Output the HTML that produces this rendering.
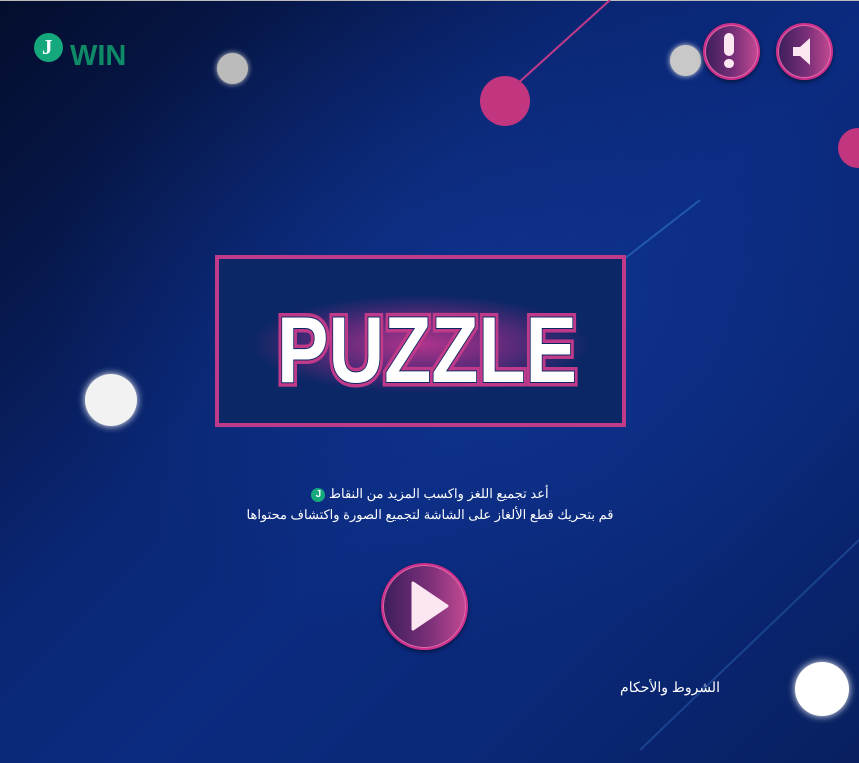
<!DOCTYPE html>
<html><head><meta charset="utf-8"><style>
html,body{margin:0;padding:0;width:859px;height:763px;overflow:hidden}
body{position:relative;background:linear-gradient(135deg,#040d2c 0%,#06174a 18%,#0a2673 38%,#0b2b80 55%,#0a2878 75%,#08205f 100%);font-family:"Liberation Sans",sans-serif}
.abs{position:absolute}
.dot{position:absolute;border-radius:50%}
.btn{position:absolute;border-radius:50%;border:2px solid #d0308c;background:linear-gradient(90deg,#3c1e5c,#7a2f78 55%,#c24a92);box-shadow:0 2px 4px rgba(0,0,0,.5),inset 0 0 0 1px #e06aaa}
.txt{color:#fff;font-family:"Liberation Sans","Noto Sans CJK SC",sans-serif;font-size:13px;direction:rtl;text-align:center}
</style></head><body>
<div class="abs" style="left:0;top:0;width:859px;height:763px;background:radial-gradient(ellipse 50% 45% at 55% 40%,rgba(20,60,160,.45),rgba(0,0,0,0))"></div>
<div class="abs" style="left:0;top:0;width:859px;height:1px;background:#bbb"></div>
<svg class="abs" style="left:0;top:0" width="859" height="763">
<line x1="505" y1="95" x2="610" y2="0" stroke="#c03a8a" stroke-width="2"/>
<line x1="430" y1="410" x2="700" y2="200" stroke="#3a8ad8" stroke-width="2" opacity=".45"/>
<line x1="640" y1="750" x2="859" y2="540" stroke="#3a7ad0" stroke-width="2" opacity=".35"/>
</svg>
<div class="dot" style="left:217px;top:53px;width:31px;height:31px;background:#bbb;box-shadow:0 0 6px #ccc"></div>
<div class="dot" style="left:670px;top:45px;width:31px;height:31px;background:#c8c8c8;box-shadow:0 0 6px #ddd"></div>
<div class="dot" style="left:480px;top:76px;width:50px;height:50px;background:#c2357f"></div>
<div class="dot" style="left:838px;top:128px;width:40px;height:40px;background:#c2357f"></div>
<div class="dot" style="left:85px;top:374px;width:52px;height:52px;background:#f2f2f2;box-shadow:0 0 8px #fff"></div>
<div class="dot" style="left:795px;top:662px;width:54px;height:54px;background:#fff;box-shadow:0 0 8px #fff"></div>
<div class="dot" style="left:34px;top:33px;width:29px;height:29px;background:#14a87c"></div>
<div class="abs" style="left:42px;top:35px;color:#fff;font:bold 21px 'Liberation Serif',serif">J</div>
<div class="abs" style="left:70px;top:40px;color:#0f8a66;font:bold 29px 'Liberation Sans',sans-serif">WIN</div>
<div class="btn" style="left:703px;top:23px;width:53px;height:53px"></div>
<div class="abs" style="left:724px;top:33px;width:10px;height:23px;background:#fbe6f2;border-radius:5px"></div>
<div class="abs" style="left:724px;top:59px;width:10px;height:9px;background:#fbe6f2;border-radius:5px"></div>
<div class="btn" style="left:776px;top:23px;width:53px;height:53px"></div>
<svg class="abs" style="left:776px;top:23px" width="57" height="57"><path d="M17 24 H24 L34 15 V42 L24 33 H17 Z" fill="#fbe6f2"/></svg>
<div class="abs" style="left:215px;top:255px;width:403px;height:164px;border:4px solid #c03a8a;background:radial-gradient(ellipse 42% 30% at 50% 52%,#b0348c 0%,#5a2a7a 55%,#0c2766 100%)"></div>
<svg class="abs" style="left:215px;top:255px" width="411" height="172">
<text x="212" y="127" text-anchor="middle" textLength="300" lengthAdjust="spacingAndGlyphs" font-family="Liberation Sans" font-weight="bold" font-size="94" fill="#fff" stroke="#c03a8a" stroke-width="9" paint-order="stroke">PUZZLE</text>
<text x="212" y="127" text-anchor="middle" textLength="300" lengthAdjust="spacingAndGlyphs" font-family="Liberation Sans" font-weight="bold" font-size="94" fill="#fff" stroke="#0c2766" stroke-width="2" paint-order="stroke">PUZZLE</text>
</svg>
<div class="txt abs" style="left:230px;top:483px;width:400px;line-height:21px">أعد تجميع اللغز واكسب المزيد من النقاط <span style="display:inline-block;width:14px;height:14px;border-radius:50%;background:#14a87c;color:#fff;font-size:10px;line-height:14px;font-weight:bold;vertical-align:middle">J</span><br>قم بتحريك قطع الألغاز على الشاشة لتجميع الصورة واكتشاف محتواها</div>
<div class="btn" style="left:381px;top:563px;width:83px;height:83px"></div>
<svg class="abs" style="left:381px;top:563px" width="87" height="87"><path d="M32 20 L66 43 L32 66 Z" fill="#fbe6f2" stroke="#fbe6f2" stroke-width="3" stroke-linejoin="round"/></svg>
<div class="txt abs" style="left:600px;top:679px;width:140px;font-size:14px">الشروط والأحكام</div>
</body></html>
